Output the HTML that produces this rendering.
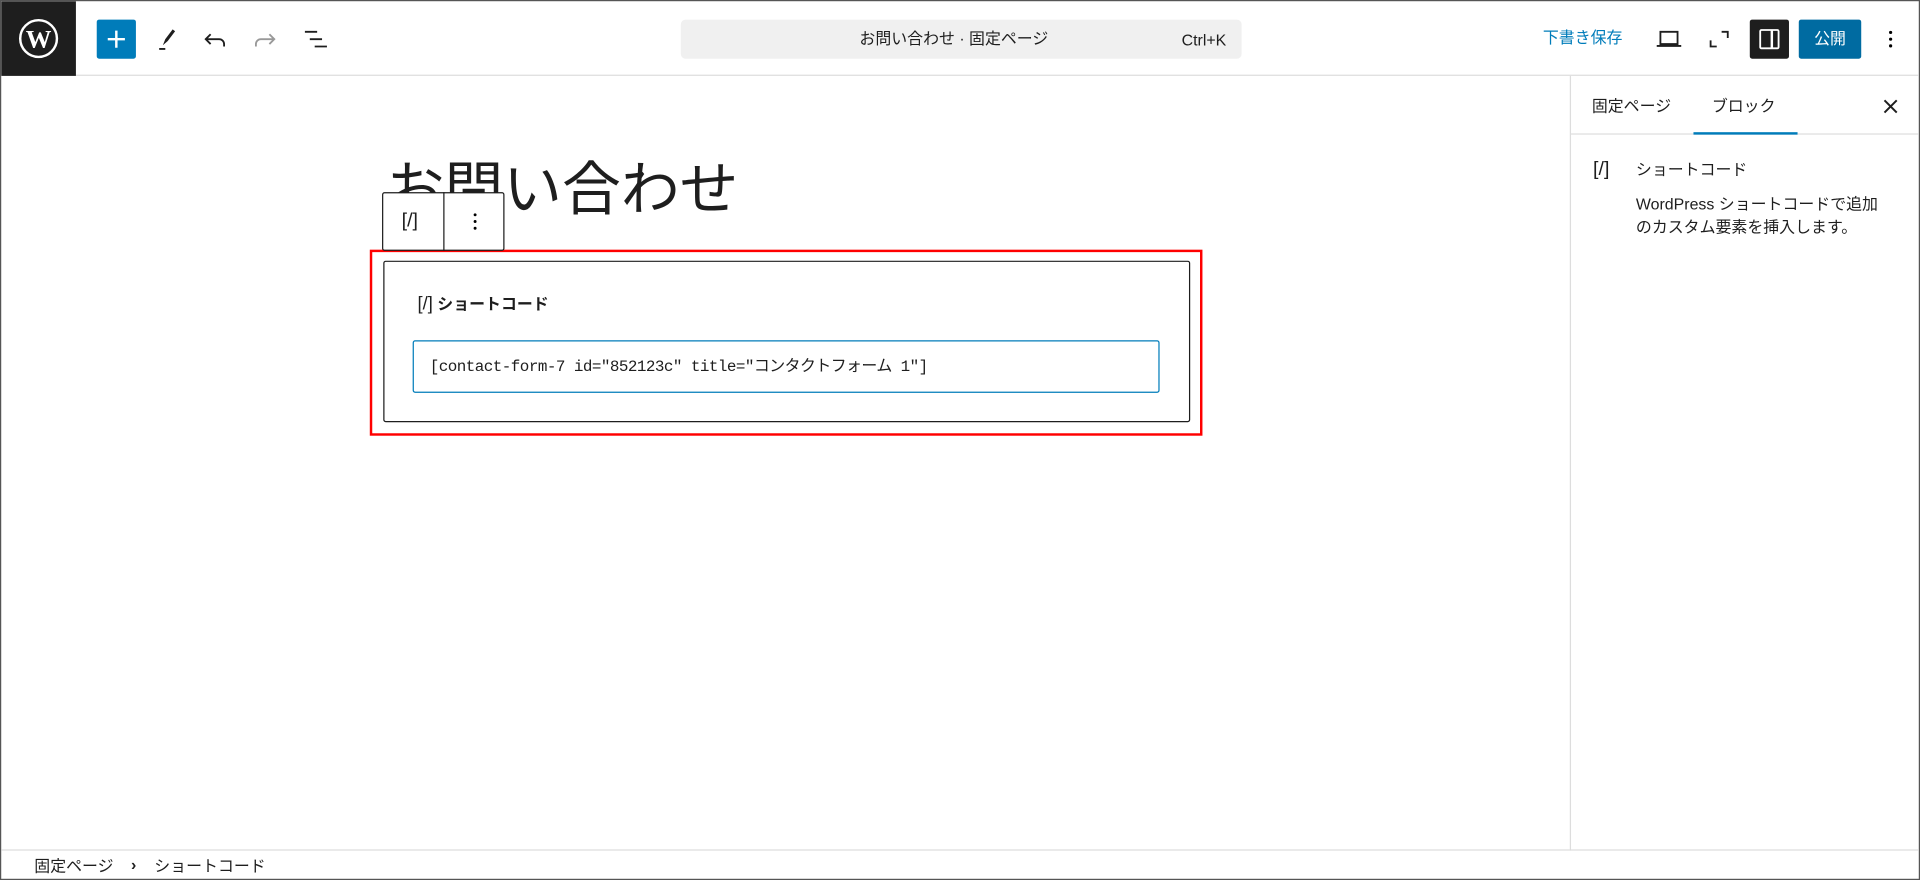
<!DOCTYPE html>
<html><head><meta charset="utf-8"><style>
*{box-sizing:border-box;margin:0;padding:0}
html,body{width:1920px;height:880px;overflow:hidden;background:#fff}
body{font-family:"Liberation Sans","Noto Sans CJK JP",sans-serif;color:#1e1e1e}
#w{position:absolute;left:0;top:0;width:1568px;height:719px;transform:scale(1.22449,1.22392);transform-origin:0 0;border:1px solid #555;overflow:hidden;background:#fff}
.a{position:absolute}
.t13{font-size:13px;line-height:16px;white-space:nowrap}
svg{display:block}
</style></head><body><div id="w">
<div class="a" style="left:0;top:0;width:1568px;height:61px;border-bottom:1px solid #ddd"></div>
<div class="a" style="left:0;top:0;width:61px;height:61px;background:#1e1e1e">
<svg width="61" height="61" viewBox="0 0 61 61"><circle cx="30.5" cy="30.5" r="15" fill="none" stroke="#fff" stroke-width="2"/><text x="30.5" y="38" text-anchor="middle" font-family="Liberation Serif,serif" font-weight="bold" font-size="21" fill="#fff">W</text></svg></div>
<div class="a" style="left:78px;top:15px;width:32px;height:32px;background:#007cba;border-radius:2px">
<svg width="32" height="32"><path d="M16 9v14M9 16h14" stroke="#fff" stroke-width="2"/></svg></div>
<svg class="a" style="left:123px;top:19px" width="24" height="24"><path d="M9 17l2-5 6-8 2 1.5-6 8z" fill="#1e1e1e"/><path d="M6 20h5" stroke="#1e1e1e" stroke-width="1.5"/></svg>
<svg class="a" style="left:163px;top:19px" width="24" height="24"><path d="M8 8l-4 4 4 4M4 12h11a4 4 0 0 1 4 4v2" fill="none" stroke="#1e1e1e" stroke-width="1.5"/></svg>
<svg class="a" style="left:203px;top:19px" width="24" height="24"><path d="M16 8l4 4-4 4M20 12H9a4 4 0 0 0-4 4v2" fill="none" stroke="#999" stroke-width="1.5"/></svg>
<svg class="a" style="left:245px;top:19px" width="24" height="24"><path d="M3 6h10M7 12h10M11 18h10" stroke="#1e1e1e" stroke-width="1.5"/></svg>
<div class="a" style="left:555px;top:15px;width:458px;height:32px;background:#f0f0f0;border-radius:4px"></div>
<div class="a t13" style="left:555px;top:23px;width:446px;text-align:center;color:#1e1e1e">お問い合わせ · 固定ページ</div>
<div class="a t13" style="left:964px;top:24px;color:#1e1e1e">Ctrl+K</div>
<div class="a t13" style="left:1259px;top:22px;color:#007cba">下書き保存</div>
<svg class="a" style="left:1350px;top:19px" width="24" height="24"><path d="M5 6h14v10H5z" fill="none" stroke="#1e1e1e" stroke-width="1.5"/><path d="M2 17.5h20" stroke="#1e1e1e" stroke-width="1.5"/></svg>
<svg class="a" style="left:1391px;top:19px" width="24" height="24"><path d="M5 13v5h5M19 11V6h-5" fill="none" stroke="#1e1e1e" stroke-width="1.5"/></svg>
<div class="a" style="left:1428px;top:15px;width:32px;height:32px;background:#1e1e1e;border-radius:2px">
<svg width="32" height="32"><rect x="8.5" y="8.5" width="15" height="15" rx="1" fill="none" stroke="#fff" stroke-width="1.5"/><path d="M18 8.5v15" stroke="#fff" stroke-width="2"/></svg></div>
<div class="a t13" style="left:1468px;top:15px;width:51px;height:32px;background:#006ba1;border-radius:2px;color:#fff;text-align:center;line-height:32px">公開</div>
<svg class="a" style="left:1531px;top:19px" width="24" height="24"><circle cx="12" cy="6.5" r="1.3"/><circle cx="12" cy="12" r="1.3"/><circle cx="12" cy="17.5" r="1.3"/></svg>
<div class="a" style="left:1281px;top:61px;width:1px;height:633px;background:#ddd"></div>
<div class="a" style="left:1282px;top:108px;width:286px;height:1px;background:#ddd"></div>
<div class="a t13" style="left:1299px;top:78px">固定ページ</div>
<div class="a t13" style="left:1397px;top:78px">ブロック</div>
<div class="a" style="left:1382px;top:107px;width:85px;height:2px;background:#007cba"></div>
<svg class="a" style="left:1535px;top:78px" width="16" height="16"><path d="M3 3l10 10M13 3L3 13" stroke="#1e1e1e" stroke-width="1.6"/></svg>
<div class="a" style="left:1300px;top:129px;font-size:16px;line-height:18px">[/]</div>
<div class="a t13" style="left:1335px;top:130px">ショートコード</div>
<div class="a t13" style="left:1335px;top:156px;line-height:19px">WordPress ショートコードで追加<br>のカスタム要素を挿入します。</div>
<div class="a" style="left:0;top:693px;width:1568px;height:1px;background:#ddd"></div>
<div class="a t13" style="left:27px;top:699px">固定ページ</div>
<div class="a t13" style="left:106px;top:698px;font-weight:bold">›</div>
<div class="a t13" style="left:125px;top:699px">ショートコード</div>
<div class="a" style="left:314px;top:126px;font-size:48px;line-height:58px;white-space:nowrap">お問い合わせ</div>
<div class="a" style="left:301px;top:203px;width:680px;height:152px;border:2px solid #f00"></div>
<div class="a" style="left:311px;top:156px;width:100px;height:48px;background:#fff;border:1px solid #1e1e1e;border-radius:2px"></div>
<div class="a" style="left:361px;top:156px;width:1px;height:48px;background:#1e1e1e"></div>
<div class="a" style="left:327px;top:171px;font-size:16px;line-height:18px">[/]</div>
<svg class="a" style="left:375px;top:168px" width="24" height="24"><circle cx="12" cy="6.5" r="1.2"/><circle cx="12" cy="12" r="1.2"/><circle cx="12" cy="17.5" r="1.2"/></svg>
<div class="a" style="left:312px;top:212px;width:659px;height:132px;border:1px solid #1e1e1e;border-radius:2px"></div>
<div class="a t13" style="left:340px;top:240px;font-weight:bold"><span style="font-weight:normal;font-size:15px">[/]</span> ショートコード</div>
<div class="a" style="left:336px;top:277px;width:610px;height:43px;border:1.5px solid #007cba;border-radius:2px"></div>
<div class="a" style="left:350px;top:291px;font-family:'Liberation Mono','Noto Sans CJK JP',monospace;font-size:13px;line-height:16px;white-space:nowrap;letter-spacing:-0.45px">[contact-form-7 id="852123c" title="コンタクトフォーム 1"]</div>
</div></body></html>
